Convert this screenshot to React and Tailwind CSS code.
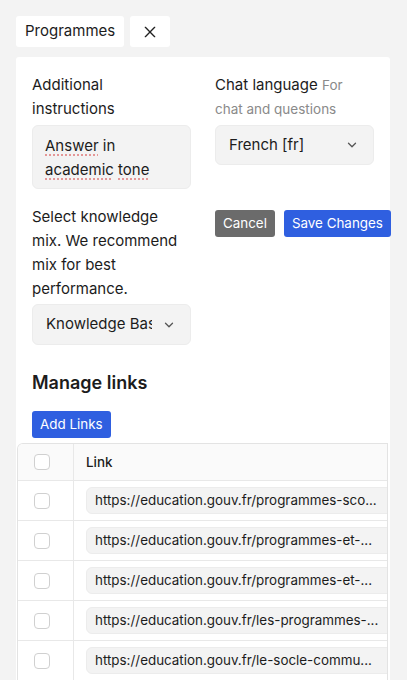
import React from 'react';

const links = [
  'https://education.gouv.fr/programmes-sco...',
  'https://education.gouv.fr/programmes-et-...',
  'https://education.gouv.fr/programmes-et-...',
  'https://education.gouv.fr/les-programmes-...',
  'https://education.gouv.fr/le-socle-commu...',
];

const Chevron = () => (
  <svg width="14" height="14" viewBox="0 0 24 24" fill="none" stroke="#555" strokeWidth="2.2" strokeLinecap="round" strokeLinejoin="round">
    <path d="M6 9l6 6 6-6" />
  </svg>
);

const Checkbox = () => <div className="w-4 h-4 rounded-[4px] border border-[#d0d0d0] bg-white" />;

const App = () => {
  return (
    <div className="min-h-[680px] bg-[#f3f3f3] px-4 pt-4 text-[#1c1c1c] font-['Inter','Liberation_Sans',sans-serif] overflow-hidden">
      {/* Tab bar */}
      <div className="flex gap-[6px]">
        <button className="h-[31px] px-[9px] bg-white rounded-[3px] text-[15px]">Programmes</button>
        <button className="h-[31px] w-[40px] bg-white rounded-[3px] flex items-center justify-center">
          <svg width="16" height="16" viewBox="0 0 24 24" fill="none" stroke="#222" strokeWidth="2" strokeLinecap="round">
            <path d="M5 5l14 14M19 5L5 19" />
          </svg>
        </button>
      </div>

      {/* Settings card */}
      <div className="mt-[10px] w-[374px] bg-white rounded-t-[3px] pt-4 px-4 pb-6">
        <div className="grid grid-cols-2 gap-x-6 gap-y-4">
          <div>
            <label className="block w-[140px] text-[15px] leading-6">Additional instructions</label>
            <div className="mt-1 h-[64px] bg-[#f3f3f3] rounded-md border border-[#ececec] px-3 pt-[8px] text-[15px] leading-6">
              <span className="underline decoration-dotted decoration-[#e07a7a] underline-offset-4">Answer</span> in
              <br />
              <span className="underline decoration-dotted decoration-[#e07a7a] underline-offset-4">academic</span>{' '}
              <span className="underline decoration-dotted decoration-[#e07a7a] underline-offset-4">tone</span>
            </div>
          </div>
          <div>
            <label className="block text-[15px] leading-6">
              Chat language <span className="text-[13.5px] text-[#8a8a8a]">For chat and questions</span>
            </label>
            <div className="mt-1 h-[40px] bg-[#f3f3f3] rounded-md border border-[#ececec] pl-[13px] pr-[14px] flex items-center justify-between text-[15px]">
              <span>French [fr]</span>
              <Chevron />
            </div>
          </div>
          <div>
            <label className="block text-[15px] leading-6">Select knowledge mix. We recommend mix for best performance.</label>
            <div className="mt-[3px] h-[41px] bg-[#f3f3f3] rounded-md border border-[#ececec] pl-[13px] pr-[14px] flex items-center justify-between text-[15px]">
              <span className="w-[106px] overflow-hidden whitespace-nowrap">Knowledge Base</span>
              <Chevron />
            </div>
          </div>
          <div className="flex gap-[9px] mt-[5px] items-start whitespace-nowrap">
            <button className="h-[27px] px-2 bg-[#6b6b6b] text-white text-[13.4px] rounded-[3px]">Cancel</button>
            <button className="h-[27px] px-2 bg-[#2f5fe0] text-white text-[13.4px] rounded-[3px]">Save Changes</button>
          </div>
        </div>

        <h2 className="mt-[24px] text-[18px] leading-7 font-semibold">Manage links</h2>
        <button className="mt-[14px] h-[27px] px-2 bg-[#2f5fe0] text-white text-[13.4px] rounded-[3px]">Add Links</button>

        <div className="mt-[5px] -ml-[15px] w-[371px] border-l border-t border-r border-[#e3e3e3] rounded-tl-md overflow-hidden">
          <div className="flex h-[37px] bg-[#fafafa] border-b border-[#e8e8e8]">
            <div className="w-[56px] border-r border-[#e8e8e8] pl-4 flex items-center">
              <Checkbox />
            </div>
            <div className="pl-[12px] flex items-center text-[13.4px] font-medium">Link</div>
          </div>
          {links.map((link, i) => (
            <div key={i} className="flex h-[40px] border-b border-[#e8e8e8]">
              <div className="w-[56px] shrink-0 border-r border-[#e8e8e8] pl-4 flex items-center">
                <Checkbox />
              </div>
              <div className="pl-[12px] flex items-center">
                <div className="h-[27px] w-[320px] shrink-0 bg-[#f3f3f3] rounded-md border border-[#ececec] px-2 flex items-center text-[13.4px] whitespace-nowrap">
                  {link}
                </div>
              </div>
            </div>
          ))}
        </div>
      </div>
    </div>
  );
};

export default App;
